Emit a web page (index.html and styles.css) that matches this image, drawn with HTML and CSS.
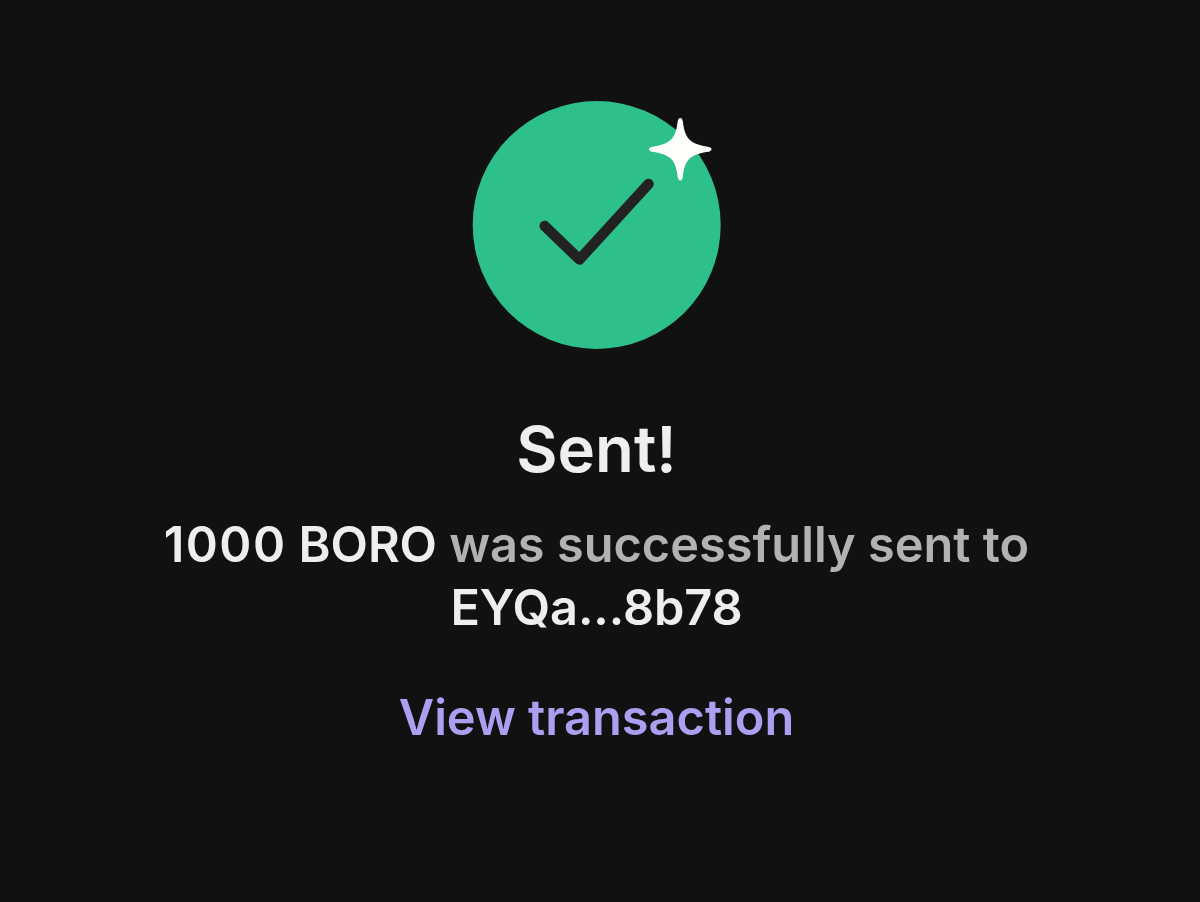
FILE: index.html
```html
<!DOCTYPE html>
<html lang="en">
<head>
  <meta charset="UTF-8">
  <meta name="viewport" content="width=device-width, initial-scale=1.0">
  <title>Sent</title>
  <link rel="stylesheet" href="styles.css">
</head>
<body>
  <main class="sent">
    <svg class="sent-icon" viewBox="0 0 248 248" aria-hidden="true">
      <circle cx="123.700" cy="124" r="124" fill="#2ec08b"/>
      <path d="M71.700 125L106.500 158.500L175.500 83" fill="none" stroke="#222222" stroke-width="10.500" stroke-linecap="round" stroke-linejoin="round"/>
      <path d="M207.300 17C208.800 17 209.500 18.500 209.900 21C212 37 216.500 42.500 233.500 45.500C237 46 238.500 46.500 238.500 48.200C238.500 49.900 237 50.500 233.500 51C216.500 54 212 59 209.900 75C209.500 78 208.800 79.500 207.300 79.500C205.800 79.500 205 78 204.600 75C202.500 59 198 54 181 51C177.500 50.500 176 49.900 176 48.200C176 46.500 177.500 46 181 45.500C198 42.500 202.500 37 204.600 21C205 18.500 205.800 17 207.300 17Z" fill="#fffffb"/>
    </svg>
    <h1 class="title">Sent!</h1>
    <p class="message"><strong><span class="amount">1000</span> BORO</strong> was successfully sent to <strong>EYQa...8b78</strong></p>
    <a class="link" href="#">View transaction</a>
  </main>
</body>
</html>
```
FILE: styles.css
```css
body { margin: 0; background: #111111; color: #eeeeee; font-family: Inter, sans-serif; }
.sent { display: flex; flex-direction: column; align-items: center; width: 1193px; padding-top: 101px; text-align: center; }
.sent-icon { width: 248px; height: 248px; overflow: visible; }
.title { margin: 58px 0 0; font-size: 63.5px; line-height: 84px; font-weight: 600; }
.message { width: 960px; margin: 22px 0 0; font-size: 48.7px; line-height: 63px; font-weight: 600; color: #b2b2b2; }
.message strong { font-weight: 600; letter-spacing: -0.1px; color: #eeeeee; }
.amount { letter-spacing: 1.4px; }
.link { margin-top: 47px; font-size: 48.7px; line-height: 63px; font-weight: 600; color: #ab9ff2; text-decoration: none; }
```
